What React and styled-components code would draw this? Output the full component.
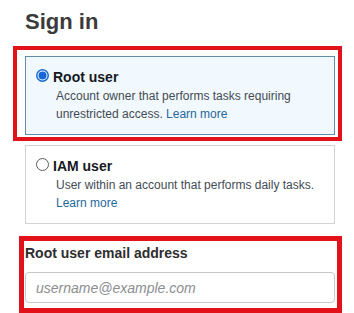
import styled, { createGlobalStyle } from 'styled-components';

const GlobalStyle = createGlobalStyle`
  html, body {
    margin: 0;
    padding: 0;
    background: #ffffff;
  }
  body {
    font-family: 'Liberation Sans', Arial, sans-serif;
  }
`;

const Page = styled.div`
  width: 354px;
  height: 313px;
  overflow: hidden;
  box-sizing: border-box;
  padding: 9px 19px 0 25px;
  display: flex;
  flex-direction: column;
`;

const Heading = styled.h1`
  margin: 0 0 21px;
  font-size: 22px;
  line-height: 26px;
  font-weight: 700;
  color: #3a3a3a;
`;

const Highlight = styled.div`
  position: relative;
  margin-top: ${(p) => p.$mt || 0}px;
  &::after {
    content: '';
    position: absolute;
    top: ${(p) => p.$top}px;
    right: ${(p) => p.$right}px;
    bottom: ${(p) => p.$bottom}px;
    left: ${(p) => p.$left}px;
    border: ${(p) => p.$width}px solid #e2121b;
    pointer-events: none;
  }
`;

const Tile = styled.label`
  display: block;
  box-sizing: border-box;
  height: 79px;
  margin-top: ${(p) => p.$mt || 0}px;
  padding: 10px 12px 11px 10px;
  border: 1px solid ${(p) => (p.$selected ? '#5f8cab' : '#cfd3d6')};
  background: ${(p) => (p.$selected ? '#f1f8fe' : '#ffffff')};
  cursor: pointer;
`;

const TileHead = styled.div`
  display: flex;
  align-items: flex-start;
  gap: 4px;
`;

const RadioMark = styled.svg`
  flex: none;
  width: 13px;
  height: 13px;
  margin-top: 2px;
`;

const TileTitle = styled.span`
  font-size: 14px;
  line-height: 20px;
  font-weight: 700;
  color: #16191f;
`;

const TileText = styled.p`
  margin: 0 0 0 20px;
  font-size: 12px;
  line-height: 18px;
  color: #444b53;
`;

const LearnMore = styled.a`
  color: #24679c;
  text-decoration: none;
`;

const Field = styled.div`
  display: flex;
  flex-direction: column;
  gap: 9px;
`;

const FieldLabel = styled.label`
  font-size: 14px;
  line-height: 20px;
  font-weight: 700;
  color: #2d2d2d;
`;

const Input = styled.input`
  box-sizing: border-box;
  width: 100%;
  height: 31px;
  padding: 0 10px;
  border: 1px solid #c4c7ca;
  border-radius: 4px;
  font-family: 'Liberation Sans', Arial, sans-serif;
  font-size: 14px;
  color: #16191f;
  outline: none;
  &::placeholder {
    color: #8b8d90;
    font-style: italic;
  }
`;

function Radio({ checked }) {
  return (
    <RadioMark viewBox="0 0 13 13">
      {checked ? (
        <>
          <circle cx="6.5" cy="6.5" r="5.75" fill="#fff" stroke="#1768d6" strokeWidth="1.5" />
          <circle cx="6.5" cy="6.5" r="4" fill="#1768d6" />
        </>
      ) : (
        <circle cx="6.5" cy="6.5" r="6" fill="#fff" stroke="#5c5c5c" strokeWidth="1" />
      )}
    </RadioMark>
  );
}

function UserTile({ selected, title, mt, children }) {
  return (
    <Tile $selected={selected} $mt={mt}>
      <TileHead>
        <Radio checked={selected} />
        <TileTitle>{title}</TileTitle>
      </TileHead>
      <TileText>{children}</TileText>
    </Tile>
  );
}

export default function App() {
  return (
    <>
      <GlobalStyle />
      <Page>
        <Heading>Sign in</Heading>
        <Highlight $top={-10} $right={-7} $bottom={-6} $left={-12} $width={4}>
          <UserTile selected title="Root user">
            Account owner that performs tasks requiring unrestricted access.{' '}
            <LearnMore href="#">Learn more</LearnMore>
          </UserTile>
        </Highlight>
        <UserTile title="IAM user" mt={10}>
          User within an account that performs daily tasks.{' '}
          <LearnMore href="#">Learn more</LearnMore>
        </UserTile>
        <Highlight $mt={19} $top={-7} $right={-7} $bottom={-10} $left={-6} $width={5}>
          <Field>
            <FieldLabel htmlFor="email">Root user email address</FieldLabel>
            <Input id="email" type="email" placeholder="username@example.com" />
          </Field>
        </Highlight>
      </Page>
    </>
  );
}
